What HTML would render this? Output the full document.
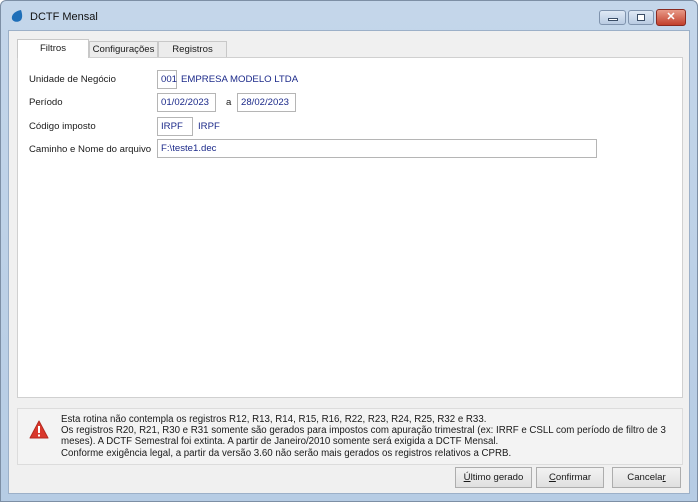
<!DOCTYPE html><html><head><style>
*{margin:0;padding:0;box-sizing:border-box}
body{width:698px;height:502px;background:#fff;font-family:"Liberation Sans",sans-serif;font-size:9.6px;color:#1a1a1a;position:relative;overflow:hidden}
.frame{position:absolute;left:0;top:0;width:698px;height:502px;background:linear-gradient(#c4d6ea,#b6cce4);border:1px solid #7d8fa5;border-radius:6px 6px 0 0}
.title{position:absolute;left:30px;top:11px;font-size:11px;color:#111}
.client{position:absolute;left:8px;top:30px;width:682px;height:464px;background:#f0f0f0;border:1px solid #9cb0c8}
.abs{position:absolute}
.tab{position:absolute;top:41px;height:17px;border:1px solid #c8c8c8;border-bottom:none;background:#ececec;text-align:center;font-size:9.6px;line-height:16px}
.panel{position:absolute;left:17px;top:57px;width:666px;height:341px;background:#fff;border:1px solid #d0d0d0}
.box{position:absolute;height:19px;border:1px solid #b5b5b5;background:#fff;color:#1c2a8a;padding:0 3px;display:flex;align-items:center;font-size:9.6px}
.lbl{position:absolute;font-size:9.6px}
.blue{color:#1c2a8a}
.msg{position:absolute;left:17px;top:408px;width:666px;height:57px;background:#f3f3f3;border:1px solid #dcdcdc;font-size:9.7px;line-height:11.2px;padding:5px 4px 0 43px;white-space:nowrap}
.btn{position:absolute;top:467px;height:21px;border:1px solid #adadad;background:linear-gradient(#f2f2f2,#e0e0e0);font-size:9.6px;text-align:center;line-height:19px}
</style></head><body>
<div class="frame"></div>
<svg class="abs" style="left:10px;top:9px" width="14" height="14"><path d="M11 1 C5 2 1 6 2 10 C3 13 8 14 11 11 C13 8 12 4 11 1Z" fill="#1f6fb8"/></svg>
<div class="title">DCTF Mensal</div>
<div class="abs" style="left:599px;top:10px;width:27px;height:15px;border:1px solid #7f93ad;border-radius:3px;background:linear-gradient(#dfe9f5,#b9cbe2)"><div class="abs" style="left:8px;top:7px;width:10px;height:3px;background:#fff;border:1px solid #3a4d66"></div></div>
<div class="abs" style="left:628px;top:10px;width:26px;height:15px;border:1px solid #7f93ad;border-radius:3px;background:linear-gradient(#dfe9f5,#b9cbe2)"><div class="abs" style="left:8px;top:3px;width:8px;height:7px;border:1px solid #3a4d66;background:#fff"></div></div>
<div class="abs" style="left:656px;top:9px;width:30px;height:17px;border:1px solid #8a2a20;border-radius:3px;background:linear-gradient(#e89a88,#c2402c);color:#fff;font-weight:bold;font-size:11px;text-align:center;line-height:15px">✕</div>
<div class="client"></div>
<div class="tab" style="left:17px;top:39px;width:72px;height:19px;background:#fff;z-index:2;line-height:18px">Filtros</div>
<div class="tab" style="left:89px;width:69px">Configurações</div>
<div class="tab" style="left:158px;width:69px">Registros</div>
<div class="panel"></div>
<div class="lbl" style="left:29px;top:74px">Unidade de Negócio</div>
<div class="box" style="left:157px;top:70px;width:20px">001</div>
<div class="lbl blue" style="left:181px;top:74px">EMPRESA MODELO LTDA</div>
<div class="lbl" style="left:29px;top:97px">Período</div>
<div class="box" style="left:157px;top:93px;width:59px">01/02/2023</div>
<div class="lbl" style="left:226px;top:97px">a</div>
<div class="box" style="left:237px;top:93px;width:59px">28/02/2023</div>
<div class="lbl" style="left:29px;top:121px">Código imposto</div>
<div class="box" style="left:157px;top:117px;width:36px">IRPF</div>
<div class="lbl blue" style="left:198px;top:121px">IRPF</div>
<div class="lbl" style="left:29px;top:144px">Caminho e Nome do arquivo</div>
<div class="box" style="left:157px;top:139px;width:440px">F:\teste1.dec</div>
<div class="msg">Esta rotina não contempla os registros R12, R13, R14, R15, R16, R22, R23, R24, R25, R32 e R33.<br>Os registros R20, R21, R30 e R31 somente são gerados para impostos com apuração trimestral (ex: IRRF e CSLL com período de filtro de 3<br>meses). A DCTF Semestral foi extinta. A partir de Janeiro/2010 somente será exigida a DCTF Mensal.<br>Conforme exigência legal, a partir da versão 3.60 não serão mais gerados os registros relativos a CPRB.</div>
<svg class="abs" style="left:29px;top:420px" width="20" height="20"><path d="M10 1 L19 18 L1 18 Z" fill="#d9372b" stroke="#b52a20" stroke-linejoin="round"/><rect x="9" y="6" width="2" height="7" fill="#fff"/><rect x="9" y="14.5" width="2" height="2" fill="#fff"/></svg>
<div class="btn" style="left:455px;width:77px"><u>Ú</u>ltimo gerado</div>
<div class="btn" style="left:536px;width:68px"><u>C</u>onfirmar</div>
<div class="btn" style="left:612px;width:69px">Cancela<u>r</u></div>
</body></html>
